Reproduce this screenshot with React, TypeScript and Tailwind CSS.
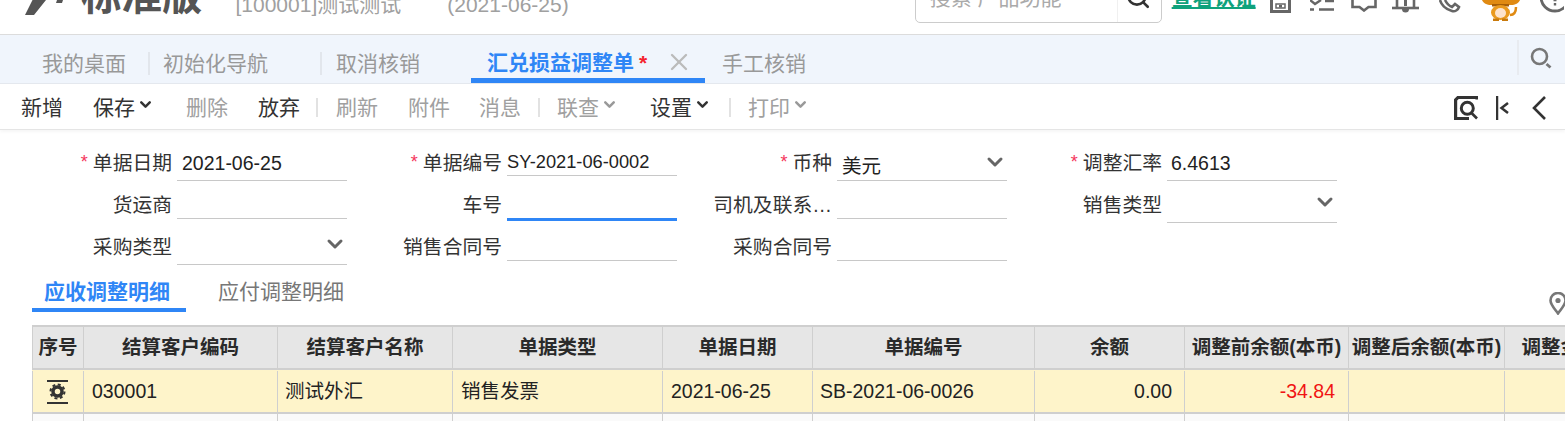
import { ChevronDown, Search, X } from "lucide-react";

const font = { fontFamily: '"Liberation Sans", "Noto Sans CJK SC", sans-serif' };

const columns = [
  { title: "序号", width: "w-[51px]" },
  { title: "结算客户编码", width: "w-[194px]" },
  { title: "结算客户名称", width: "w-[175px]" },
  { title: "单据类型", width: "w-[210px]" },
  { title: "单据日期", width: "w-[150px]" },
  { title: "单据编号", width: "w-[222px]" },
  { title: "余额", width: "w-[150px]" },
  { title: "调整前余额(本币)", width: "w-[164px]" },
  { title: "调整后余额(本币)", width: "w-[156px]" },
  { title: "调整金额", width: "w-[112px]" },
];

function ToolItem({ label, muted, caret, className }: { label: string; muted?: boolean; caret?: boolean; className?: string }) {
  return (
    <span className={`flex items-center whitespace-nowrap ${muted ? "text-[#a0a0a0]" : "text-[#333]"} ${className ?? ""}`}>
      {label}
      {caret && <ChevronDown size={17} strokeWidth={3.5} className={`ml-[2px] -mt-[6px] ${muted ? "text-[#999]" : "text-[#333]"}`} />}
    </span>
  );
}

function Sep({ className }: { className: string }) {
  return <span className={`h-[19px] w-[2px] bg-[#e2e2e2] ${className}`} />;
}

type FieldProps = {
  label: string;
  required?: boolean;
  value?: string;
  select?: boolean;
  compact?: boolean;
  focus?: boolean;
  lowered?: boolean;
  top?: boolean;
  valueClass?: string;
};

function Field({ label, required, value, select, compact, focus, lowered, top, valueClass }: FieldProps) {
  let box = "h-[38px] border-b border-[#c8c8c8]";
  if (compact) box = "h-[33px] mb-[5px] pt-[5px] border-b border-[#c8c8c8]";
  if (focus) box = "h-[40px] -mb-[2px] border-b-[3px] border-[#2f86f6]";
  if (lowered) box = "h-[42px] -mb-[4px] border-b border-[#c8c8c8]";

  return (
    <div className="flex w-[330px] shrink-0 items-end">
      <label className={`flex h-[38px] w-[172px] shrink-0 items-center justify-end whitespace-nowrap text-[19.8px] text-[#333] ${top ? "pt-[4px]" : "pt-[12px]"}`}>
        {required && <span className="mr-[5px] mt-[-3px] text-[18px] text-[#f5365c]">*</span>}
        {label}
      </label>
      <div className={`ml-[5px] flex w-[170px] shrink-0 items-center justify-between ${box}`}>
        <span className={`${compact ? "text-[18.25px]" : "text-[19.5px]"} ${valueClass ?? "pl-[5px] pt-[4px]"} text-[#222]`}>{value}</span>
        {select && <ChevronDown size={24} strokeWidth={3} className="text-[#666]" />}
      </div>
    </div>
  );
}

function TopIcons() {
  return (
    <div className="flex items-start text-[#666]">
      <svg width="21" height="13" viewBox="0 0 21 13" className="ml-[14px]" fill="none" stroke="currentColor">
        <path d="M1.500 0v11.500h18V0" strokeWidth="3" />
        <path d="M6 4h9v4H6z" strokeWidth="1.500" />
        <path d="M9 5h3v2.500H9z" fill="currentColor" strokeWidth="0" />
      </svg>
      <svg width="24" height="12" viewBox="0 0 24 12" className="ml-[19px]" fill="none" stroke="currentColor">
        <path d="M0 0l5 4 6-4" strokeWidth="2.400" />
        <path d="M15 1h9M9 9.500h15M0 9.500h4" strokeWidth="2.400" />
      </svg>
      <svg width="26" height="12" viewBox="0 0 26 12" className="ml-[17px]" fill="none" stroke="currentColor">
        <path d="M1.500 0v7h7l4.500 3.500 4.500-3.500h7V0" strokeWidth="2.600" />
      </svg>
      <svg width="27" height="13" viewBox="0 0 27 13" className="ml-[15px]" fill="none" stroke="currentColor">
        <path d="M0 8h27" strokeWidth="2.600" />
        <path d="M5 0v8M22 0v8" strokeWidth="2.600" />
        <path d="M10 9a3.500 3.500 0 0 0 7 0z" fill="currentColor" strokeWidth="0" />
        <path d="M12 0h3v6h-3z" fill="currentColor" strokeWidth="0" />
      </svg>
      <svg width="22" height="13" viewBox="0 0 22 13" className="ml-[20px]" fill="none" stroke="currentColor">
        <path d="M1 0c1 4 5 9 12 11 3 1 6-1 7-4l-4-3-3 3C10 6 8 4 6 0" strokeWidth="2.600" />
      </svg>
      <svg width="40" height="21" viewBox="0 0 40 21" className="ml-[20px]">
        <path d="M1 0h38c-1 3-5 5-9 5H10C6 5 2 3 1 0z" fill="#e08a12" />
        <path d="M11 4h17v2.500H11z" fill="#a85f06" />
        <ellipse cx="19.500" cy="12.500" rx="9.500" ry="7.500" fill="#ea9a1e" />
        <ellipse cx="19.500" cy="13" rx="5.500" ry="5" fill="#fde3cc" />
        <path d="M12 18.500h6V21h-6zM21 18.500h6V21h-6z" fill="#c97a0c" />
        <path d="M29 15c3 0 6-1 6-8" fill="none" stroke="#e08a12" strokeWidth="2.500" />
      </svg>
      <svg width="24" height="13" viewBox="0 0 24 13" className="ml-[19px]" fill="none" stroke="currentColor">
        <circle cx="15" cy="-3" r="14" strokeWidth="2.800" />
        <path d="M13.500 0h3v1.200h-3zM13.800 3h2.400v2.400h-2.400z" fill="currentColor" strokeWidth="0" />
      </svg>
    </div>
  );
}

export default function App() {
  return (
    <div style={font} className="h-[421px] w-[1565px] overflow-hidden bg-white">
      {/* top bar, its upper part is outside the window */}
      <div className="flex h-[34px] items-start overflow-hidden whitespace-nowrap pl-[24px]">
        <svg width="40" height="16" viewBox="0 0 40 16" className="shrink-0 text-[#555]" fill="currentColor">
          <path d="M1 15L8.500 0H22L10 15zM33 0h6l-1 3h-6z" />
        </svg>
        <span className="ml-[17px] -mt-[24px] text-[40.500px] font-bold leading-[40px] text-[#555]">标准版</span>
        <span className="ml-[33px] -mt-[6px] text-[21px] leading-[21px] text-[#a0a0a0]">[100001]测试测试</span>
        <span className="ml-[46px] -mt-[6px] text-[21px] leading-[21px] text-[#a0a0a0]">(2021-06-25)</span>
        <div className="ml-[346px] -mt-[22px] flex h-[45px] w-[247px] shrink-0 items-center rounded-[5px] border border-[#ccc] pl-[14px] text-[21px] text-[#aaa]">
          <span className="-mt-[5px] w-[187px]">搜索 产品功能</span>
          <span className="h-full w-[1px] bg-[#f0f0f0]" />
          <Search size={26} strokeWidth={2.400} className="ml-[7px] -mt-[8px] text-[#333]" />
        </div>
        <span className="ml-[10px] -mt-[13px] text-[21px] font-bold leading-[21px] text-[#0fa27c] underline">查看认证</span>
        <TopIcons />
      </div>
      <div className="h-[1px] bg-[#dcdcdc]" />

      {/* tabs */}
      <div className="flex h-[49px] items-center border-b border-[#e4e8ee] bg-[#f0f5fc] pt-[9px] text-[21px] text-[#999]">
        <span className="ml-[42px]">我的桌面</span>
        <Sep className="ml-[22px] h-[23px] bg-[#e2e6ec]" />
        <span className="ml-[13px]">初始化导航</span>
        <Sep className="ml-[52px] h-[23px] bg-[#e2e6ec]" />
        <span className="ml-[14px]">取消核销</span>
        <div className="ml-[51px] flex w-[234px] items-center self-end border-b-[5px] border-[#2f86f6]">
          <span className="ml-[16px] font-bold text-[#2f86f6]">汇兑损益调整单</span>
          <span className="ml-[5px] font-bold text-[#f5222d]">*</span>
          <X size={28} strokeWidth={2} className="ml-[18px] text-[#bbb]" />
        </div>
        <span className="ml-[17px]">手工核销</span>
        <div className="ml-auto -mt-[13px] flex h-[35px] w-[48px] items-center border-l-2 border-[#e8ebf0] pl-[10px]">
          <svg width="24" height="24" viewBox="0 0 24 24" className="mt-[4px]" fill="none" stroke="#777">
            <circle cx="10.500" cy="9.500" r="7.500" strokeWidth="2.600" />
            <path d="M17.500 17l4 3.500" strokeWidth="2.800" />
          </svg>
        </div>
      </div>

      {/* toolbar */}
      <div className="flex h-[46px] items-center border-b border-[#e5e5e5] pt-[2px] text-[21px] shadow-[0_2px_3px_rgba(0,0,0,0.04)]">
        <ToolItem label="新增" className="ml-[21px]" />
        <ToolItem label="保存" caret className="ml-[30px]" />
        <ToolItem label="删除" muted className="ml-[32px]" />
        <ToolItem label="放弃" className="ml-[30px]" />
        <Sep className="ml-[16px]" />
        <ToolItem label="刷新" muted className="ml-[18px]" />
        <ToolItem label="附件" muted className="ml-[30px]" />
        <ToolItem label="消息" muted className="ml-[29px]" />
        <Sep className="ml-[17px]" />
        <ToolItem label="联查" muted caret className="ml-[17px]" />
        <ToolItem label="设置" caret className="ml-[32px]" />
        <Sep className="ml-[18px]" />
        <ToolItem label="打印" muted caret className="ml-[17px]" />
        <div className="ml-auto mr-[19px] flex items-center text-[#333]">
          <svg width="24" height="24" viewBox="0 0 24 24" fill="none" stroke="currentColor">
            <path d="M23 3.500V1.500H4L1.600 4v18.500H15" strokeWidth="3.200" />
            <circle cx="13.300" cy="12.300" r="6" strokeWidth="3" />
            <path d="M17.500 17l5.500 5.500" strokeWidth="2.600" />
          </svg>
          <svg width="13" height="24" viewBox="0 0 13 24" className="ml-[18px]" fill="none" stroke="currentColor">
            <path d="M1 0v24" strokeWidth="2.500" />
            <path d="M12 7l-6.500 5 6.500 5" strokeWidth="2.500" />
          </svg>
          <svg width="14" height="24" viewBox="0 0 14 24" className="ml-[23px]" fill="none" stroke="currentColor">
            <path d="M13 1L2 12l11 11" strokeWidth="2.600" />
          </svg>
        </div>
      </div>

      {/* form */}
      <div className="flex flex-col pt-[13px]">
        <div className="flex h-[38px] items-end">
          <Field label="单据日期" required top value="2021-06-25" />
          <Field label="单据编号" required top value="SY-2021-06-0002" compact valueClass="pl-0" />
          <Field label="币种" required top value="美元" select valueClass="pl-[5px] pt-[11px]" />
          <Field label="调整汇率" required top value="6.4613" valueClass="pl-[4px] pt-[4px]" />
        </div>
        <div className="flex h-[38px] items-end">
          <Field label="货运商" />
          <Field label="车号" focus />
          <Field label="司机及联系…" />
          <Field label="销售类型" select lowered />
        </div>
        <div className="flex h-[42px] items-end">
          <Field label="采购类型" select lowered />
          <Field label="销售合同号" />
          <Field label="采购合同号" />
        </div>
      </div>

      {/* detail tabs */}
      <div className="ml-[32px] mt-[14px] flex h-[37px] items-start text-[21px]">
        <span className="h-[37px] w-[154px] border-b-[4px] border-[#2f86f6] pl-[12px] font-bold leading-[33px] text-[#2f86f6]">应收调整明细</span>
        <span className="ml-[32px] leading-[33px] text-[#777]">应付调整明细</span>
        <svg width="18" height="23" viewBox="0 0 18 23" className="ml-auto -mr-[2px] mt-[17px] shrink-0" fill="none">
          <path d="M9 21.500C5 16 1.500 12.500 1.500 8.500a7.500 7.500 0 0 1 15 0c0 4-3.500 7.500-7.500 13z" stroke="#777" strokeWidth="2.600" />
          <circle cx="9" cy="8.500" r="2.600" fill="#777" />
        </svg>
      </div>

      {/* grid */}
      <div className="ml-[32px] mt-[13px] w-[1533px] overflow-hidden">
        <div className="flex h-[45px] w-max border-y-2 border-[#cfcfcf] bg-[#e6e6e6] text-[19.500px] font-bold text-[#2a2a2a]">
          {columns.map((c) => (
            <div key={c.title} className={`${c.width} flex shrink-0 items-center justify-center whitespace-nowrap border-l border-[#cfcfcf]`}>{c.title}</div>
          ))}
        </div>
        <div className="flex h-[44px] w-max border-b-2 border-[#cfcfcf] bg-[#fef4ca] pt-[1px] text-[19.500px] text-[#222]">
          <div className="flex w-[51px] shrink-0 items-center justify-center border-l border-[#cfcfcf]">
            <svg width="22" height="24" viewBox="0 0 22 24" fill="#333">
              <path d="M0 0h21v2H0zM0 22h21v2H0z" />
              <circle cx="10.500" cy="11.500" r="4.500" fill="none" stroke="#333" strokeWidth="3.500" />
              <circle cx="10.500" cy="11.500" r="7" fill="none" stroke="#333" strokeWidth="2" strokeDasharray="3 2.500" />
            </svg>
          </div>
          <div className="flex w-[194px] shrink-0 items-center border-l border-[#cfcfcf] pl-[8px]">030001</div>
          <div className="flex w-[175px] shrink-0 items-center border-l border-[#cfcfcf] pl-[7px]">测试外汇</div>
          <div className="flex w-[210px] shrink-0 items-center border-l border-[#cfcfcf] pl-[8px]">销售发票</div>
          <div className="flex w-[150px] shrink-0 items-center border-l border-[#cfcfcf] pl-[8px]">2021-06-25</div>
          <div className="flex w-[222px] shrink-0 items-center border-l border-[#cfcfcf] pl-[7px]">SB-2021-06-0026</div>
          <div className="flex w-[150px] shrink-0 items-center justify-end border-l border-[#cfcfcf] pr-[12px]">0.00</div>
          <div className="flex w-[164px] shrink-0 items-center justify-end border-l border-[#cfcfcf] pr-[13px] text-[#f01414]">-34.84</div>
          <div className="w-[156px] shrink-0 border-l border-[#cfcfcf]" />
          <div className="w-[112px] shrink-0 border-l border-[#cfcfcf]" />
        </div>
        <div className="flex h-[10px] w-max bg-[#fafafa]">
          {columns.map((c) => (
            <div key={c.title} className={`${c.width} shrink-0 border-l border-[#cfcfcf]`} />
          ))}
        </div>
      </div>
    </div>
  );
}
